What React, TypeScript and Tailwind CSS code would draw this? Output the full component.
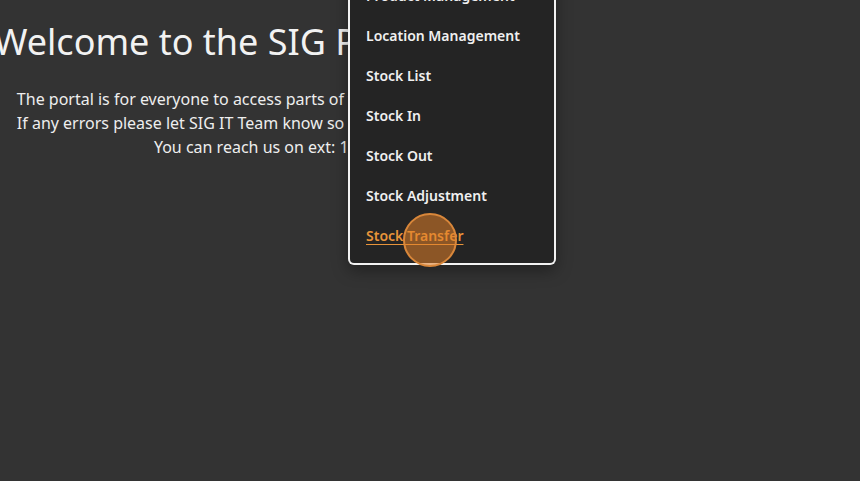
import React from 'react'

const items = [
  'Product Management',
  'Location Management',
  'Stock List',
  'Stock In',
  'Stock Out',
  'Stock Adjustment',
  'Stock Transfer',
]

export default function App() {
  return (
    <div
      className="relative min-h-[481px] w-full overflow-hidden bg-[#333333] text-[#f2f2f2]"
      style={{ fontFamily: '"Noto Sans", "Open Sans", sans-serif' }}
    >
      <div className="w-[530px] pt-[16px] text-center">
        <h1 className="-ml-[6px] whitespace-nowrap text-left text-[36px] font-normal leading-[52px]">
          Welcome to the SIG Portal
        </h1>
        <div className="mt-[19px] text-[16px] leading-[24px] text-[#eeeeee]">
          <p className="whitespace-nowrap">The portal is for everyone to access parts of the system they need.</p>
          <p className="whitespace-nowrap">If any errors please let SIG IT Team know so they can fix it quickly!!</p>
          <p className="whitespace-nowrap">You can reach us on ext: 1234</p>
        </div>
      </div>

      <div className="absolute left-[348px] top-[-33px] w-[208px] rounded-b-[6px] border-2 border-t-0 border-[#f2f2f2] bg-[#242424] pt-2 pb-2 shadow-[0_6px_16px_rgba(0,0,0,0.35)]">
        {items.map((item, i) => {
          const active = i === items.length - 1
          return (
            <div key={item} className="flex h-[40px] items-center px-4">
              <span
                className={
                  active
                    ? 'text-[14px] font-semibold text-[#e8943a] underline underline-offset-[3px]'
                    : 'text-[14px] font-semibold text-[#f0f0f0]'
                }
              >
                {item}
              </span>
            </div>
          )
        })}
      </div>

      <div className="pointer-events-none absolute left-[403px] top-[213px] h-[54px] w-[54px] rounded-full border-2 border-[#d9873a] bg-[rgba(226,128,40,0.55)]" />
    </div>
  )
}
